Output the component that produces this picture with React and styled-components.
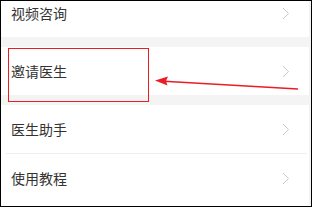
import React from 'react';
import styled, { createGlobalStyle } from 'styled-components';

// ----- GLOBAL

const GlobalStyle = createGlobalStyle`
	html, body {
		margin: 0;
		padding: 0;
		background: #ffffff;
	}
	body {
		font-family: "Noto Sans CJK SC", "Noto Sans", sans-serif;
	}
`;

// ----- STYLED COMPONENTS

const Frame = styled.div`
	position: relative;
	width: 312px;
	height: 207px;
	box-sizing: border-box;
	border: 1px solid #000;
	overflow: hidden;
	background: #f4f4f5;
`;
const Scroller = styled.div`
	margin-top: -12px;
	display: flex;
	flex-direction: column;
`;
const Group = styled.div`
	display: flex;
	flex-direction: column;
	background: #fff;
	margin-right: 2px;
	margin-bottom: ${({ gap }) => gap || 0}px;
`;
const Row = styled.div`
	height: 48px;
	display: flex;
	align-items: center;
	justify-content: space-between;
	padding: 0 19px 0 10px;
	box-sizing: border-box;
`;
const Label = styled.span`
	font-size: 14px;
	line-height: 1;
	color: #333;
`;
const Divider = styled.div`
	height: 1px;
	margin: 0 2px 0 5px;
	background: #efeff1;
`;
const Chevron = styled.svg`
	width: 8px;
	height: 13px;
	display: block;
`;
const Highlight = styled.div`
	position: absolute;
	left: 7px;
	top: 47px;
	width: 141px;
	height: 54px;
	box-sizing: border-box;
	border: 1px solid #ec1c24;
	pointer-events: none;
`;
const Annotation = styled.svg`
	position: absolute;
	left: -1px;
	top: -1px;
	width: 312px;
	height: 207px;
	pointer-events: none;
`;

// ----- CONTENTS

const Arrow = () => (
	<Chevron viewBox="0 0 8 13">
		<polyline points="1,1 6.5,6.5 1,12" fill="none" stroke="#c9c9cb" strokeWidth="1" />
	</Chevron>
);

const Item = ({ label }) => (
	<Row>
		<Label>{label}</Label>
		<Arrow />
	</Row>
);

export default () => {
	return (
		<>
			<GlobalStyle />
			<Frame>
				<Scroller>
					<Group gap={10}>
						<Item label="视频咨询" />
					</Group>
					<Group gap={10}>
						<Item label="邀请医生" />
					</Group>
					<Group>
						<Item label="医生助手" />
						<Divider />
						<Item label="使用教程" />
						<div style={{ height: 8 }} />
					</Group>
				</Scroller>
				<Highlight />
				<Annotation viewBox="0 0 312 207">
					<line x1="298" y1="89" x2="164" y2="81.2" stroke="#ec1c24" strokeWidth="1.4" />
					<polygon points="155,80.6 168,76.6 166,81 167.5,85.4" fill="#ec1c24" />
				</Annotation>
			</Frame>
		</>
	);
};
